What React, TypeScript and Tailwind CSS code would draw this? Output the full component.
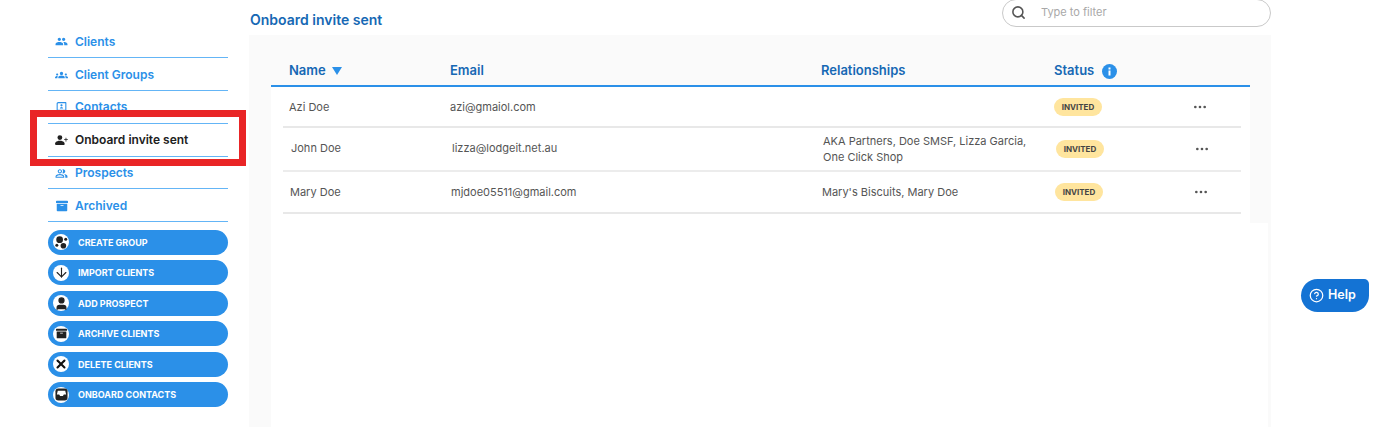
import React from 'react';
import { ArrowDown, HelpCircle, MoreHorizontal, Search, User, X } from 'lucide-react';
import { BsPersonPlusFill } from 'react-icons/bs';
import { FaArchive } from 'react-icons/fa';
import { MdGroups, MdOutlinePeopleAlt, MdPeople } from 'react-icons/md';
import { RiContactsBook2Line } from 'react-icons/ri';

const navItems = [
  { label: 'Clients', icon: <MdPeople size={17} /> },
  { label: 'Client Groups', icon: <MdGroups size={18} /> },
  { label: 'Contacts', icon: <RiContactsBook2Line size={15} /> },
  { label: 'Onboard invite sent', icon: <BsPersonPlusFill size={14} />, active: true },
  { label: 'Prospects', icon: <MdOutlinePeopleAlt size={15} /> },
  { label: 'Archived', icon: <FaArchive size={12} /> },
];

const GroupIcon = () => (
  <svg width="15" height="15" viewBox="0 0 16 16" fill="#222">
    <circle cx="6" cy="5" r="3.6" />
    <circle cx="12.5" cy="4.5" r="1.6" />
    <circle cx="3" cy="11" r="1.6" />
    <circle cx="10" cy="11.5" r="3" />
  </svg>
);

const TrayIcon = () => (
  <svg width="13" height="13" viewBox="0 0 14 14">
    <rect x="0.5" y="0.5" width="13" height="13" rx="3" fill="#222" />
    <path d="M3 3h8l1 4H9.5L8.500 8.500h-3L4.500 7H2z" fill="#fff" />
  </svg>
);

const actions = [
  { label: 'CREATE GROUP', icon: <GroupIcon /> },
  { label: 'IMPORT CLIENTS', icon: <ArrowDown size={15} strokeWidth={1.8} color="#222" /> },
  { label: 'ADD PROSPECT', icon: <User size={15} fill="#222" color="#222" /> },
  { label: 'ARCHIVE CLIENTS', icon: <FaArchive size={11} color="#222" /> },
  { label: 'DELETE CLIENTS', icon: <X size={14} strokeWidth={3.5} color="#111" /> },
  { label: 'ONBOARD CONTACTS', icon: <TrayIcon /> },
];

const rows = [
  { name: 'Azi Doe', email: 'azi@gmaiol.com', rel: '', h: 'h-[41px] pt-px', shift: 'pl-0', line: 'border-[#e8e8e8]' },
  { name: 'John Doe', email: 'lizza@lodgeit.net.au', rel: 'AKA Partners, Doe SMSF, Lizza Garcia, One Click Shop', h: 'h-[44px] pb-px', shift: 'pl-0.5', line: 'border-[#ececec]' },
  { name: 'Mary Doe', email: 'mjdoe05511@gmail.com', rel: "Mary's Biscuits, Mary Doe", h: 'h-[42px]', shift: 'pl-px', line: 'border-[#e8e8e8]' },
];

export default function App() {
  return (
    <div className="relative flex h-[427px] w-[1392px] overflow-hidden bg-white font-['Inter',sans-serif]">
      <aside className="ml-12 mr-[21px] w-[180px] shrink-0 pt-[25.5px]">
        <nav className="flex flex-col">
          {navItems.map((item) => (
            <div
              key={item.label}
              className={`flex h-[32.8px] items-center gap-[7px] border-b border-[#64b5f6] pl-[7px] pt-px text-[12px] font-semibold ${item.active ? 'text-[#212121]' : 'text-[#2b90e8]'}`}
            >
              <span className="flex w-[13px] items-center justify-center">{item.icon}</span>
              <span>{item.label}</span>
            </div>
          ))}
        </nav>
        <div className="mt-[7.5px] flex flex-col gap-[5.5px]">
          {actions.map((action) => (
            <button
              key={action.label}
              className="flex h-[25px] items-center gap-[9px] rounded-full bg-[#2b90e8] pl-[5px] text-[9px] font-bold text-white"
            >
              <span className="flex size-[16px] items-center justify-center rounded-full bg-white">{action.icon}</span>
              <span>{action.label}</span>
            </button>
          ))}
        </div>
      </aside>

      <main className="w-[1022px] shrink-0">
        <div className="flex h-[35px] items-start justify-between">
          <h1 className="pl-px pt-[11px] text-[14px] font-semibold leading-[18px] text-[#1668b4]">Onboard invite sent</h1>
          <div className="-mt-px flex h-[28px] w-[269px] items-center gap-[15px] rounded-[14px] border border-[#c9c9c9] pb-px pl-[8px]">
            <Search size={15} color="#555" strokeWidth={2.5} />
            <span className="text-[11px] text-[#a8a8a8]">Type to filter</span>
          </div>
        </div>

        <div className="flex h-[392px] flex-col bg-[#fafafa] pl-[22px]">
          <div className="w-[979px] pt-[24px]">
            <div className="flex h-[28px] items-center border-b-2 border-[#2b90e8] pb-0.5 text-[13px] font-semibold text-[#1668b4]">
              <div className="flex w-[179px] items-center gap-[6px] pl-[18px]">
                Name
                <svg width="10" height="8" viewBox="0 0 10 8" fill="#2b90e8"><path d="M0 0h10L5 8z" /></svg>
              </div>
              <div className="w-[371px]">Email</div>
              <div className="w-[233px]">Relationships</div>
              <div className="flex items-center gap-[8px]">
                Status
                <svg width="15" height="15" viewBox="0 0 15 15">
                  <circle cx="7.500" cy="7.500" r="7.500" fill="#2b90e8" />
                  <rect x="6.500" y="6.500" width="2" height="5" fill="#fff" />
                  <rect x="6.500" y="3.500" width="2" height="2" fill="#fff" />
                </svg>
              </div>
            </div>
          </div>
          <div className="h-[136px] w-[979px] bg-white">
            <div className="ml-3 w-[958px] text-[11px] text-[#555]">
              {rows.map((row) => (
                <div key={row.name} className={`flex items-center border-b-2 ${row.h} ${row.line} ${row.shift}`}>
                  <div className="w-[167px] shrink-0 pl-[6px]">{row.name}</div>
                  <div className="w-[371px] shrink-0">{row.email}</div>
                  <div className="w-[233px] shrink-0 pr-[6px] leading-4">{row.rel}</div>
                  <div className="w-[138px] shrink-0">
                    <span className="inline-flex h-[18px] w-12 items-center justify-center rounded-full bg-[#ffe59e] text-[8px] font-bold text-[#444]">INVITED</span>
                  </div>
                  <MoreHorizontal size={16} color="#555" />
                </div>
              ))}
            </div>
          </div>
          <div className="w-[997px] flex-1 bg-white" />
        </div>
      </main>

      <div className="absolute left-[30px] top-[110px] h-[56px] w-[216px] border-[7px] border-[#e92526]" />
      <button className="absolute left-[1301px] top-[279px] flex h-[33px] w-[68px] items-center gap-[4px] rounded-l-[17px] rounded-br-[17px] rounded-tr-[5px] bg-[#1473d4] pl-2 text-[12.5px] font-semibold text-white">
        <HelpCircle size={15} />
        Help
      </button>
    </div>
  );
}
